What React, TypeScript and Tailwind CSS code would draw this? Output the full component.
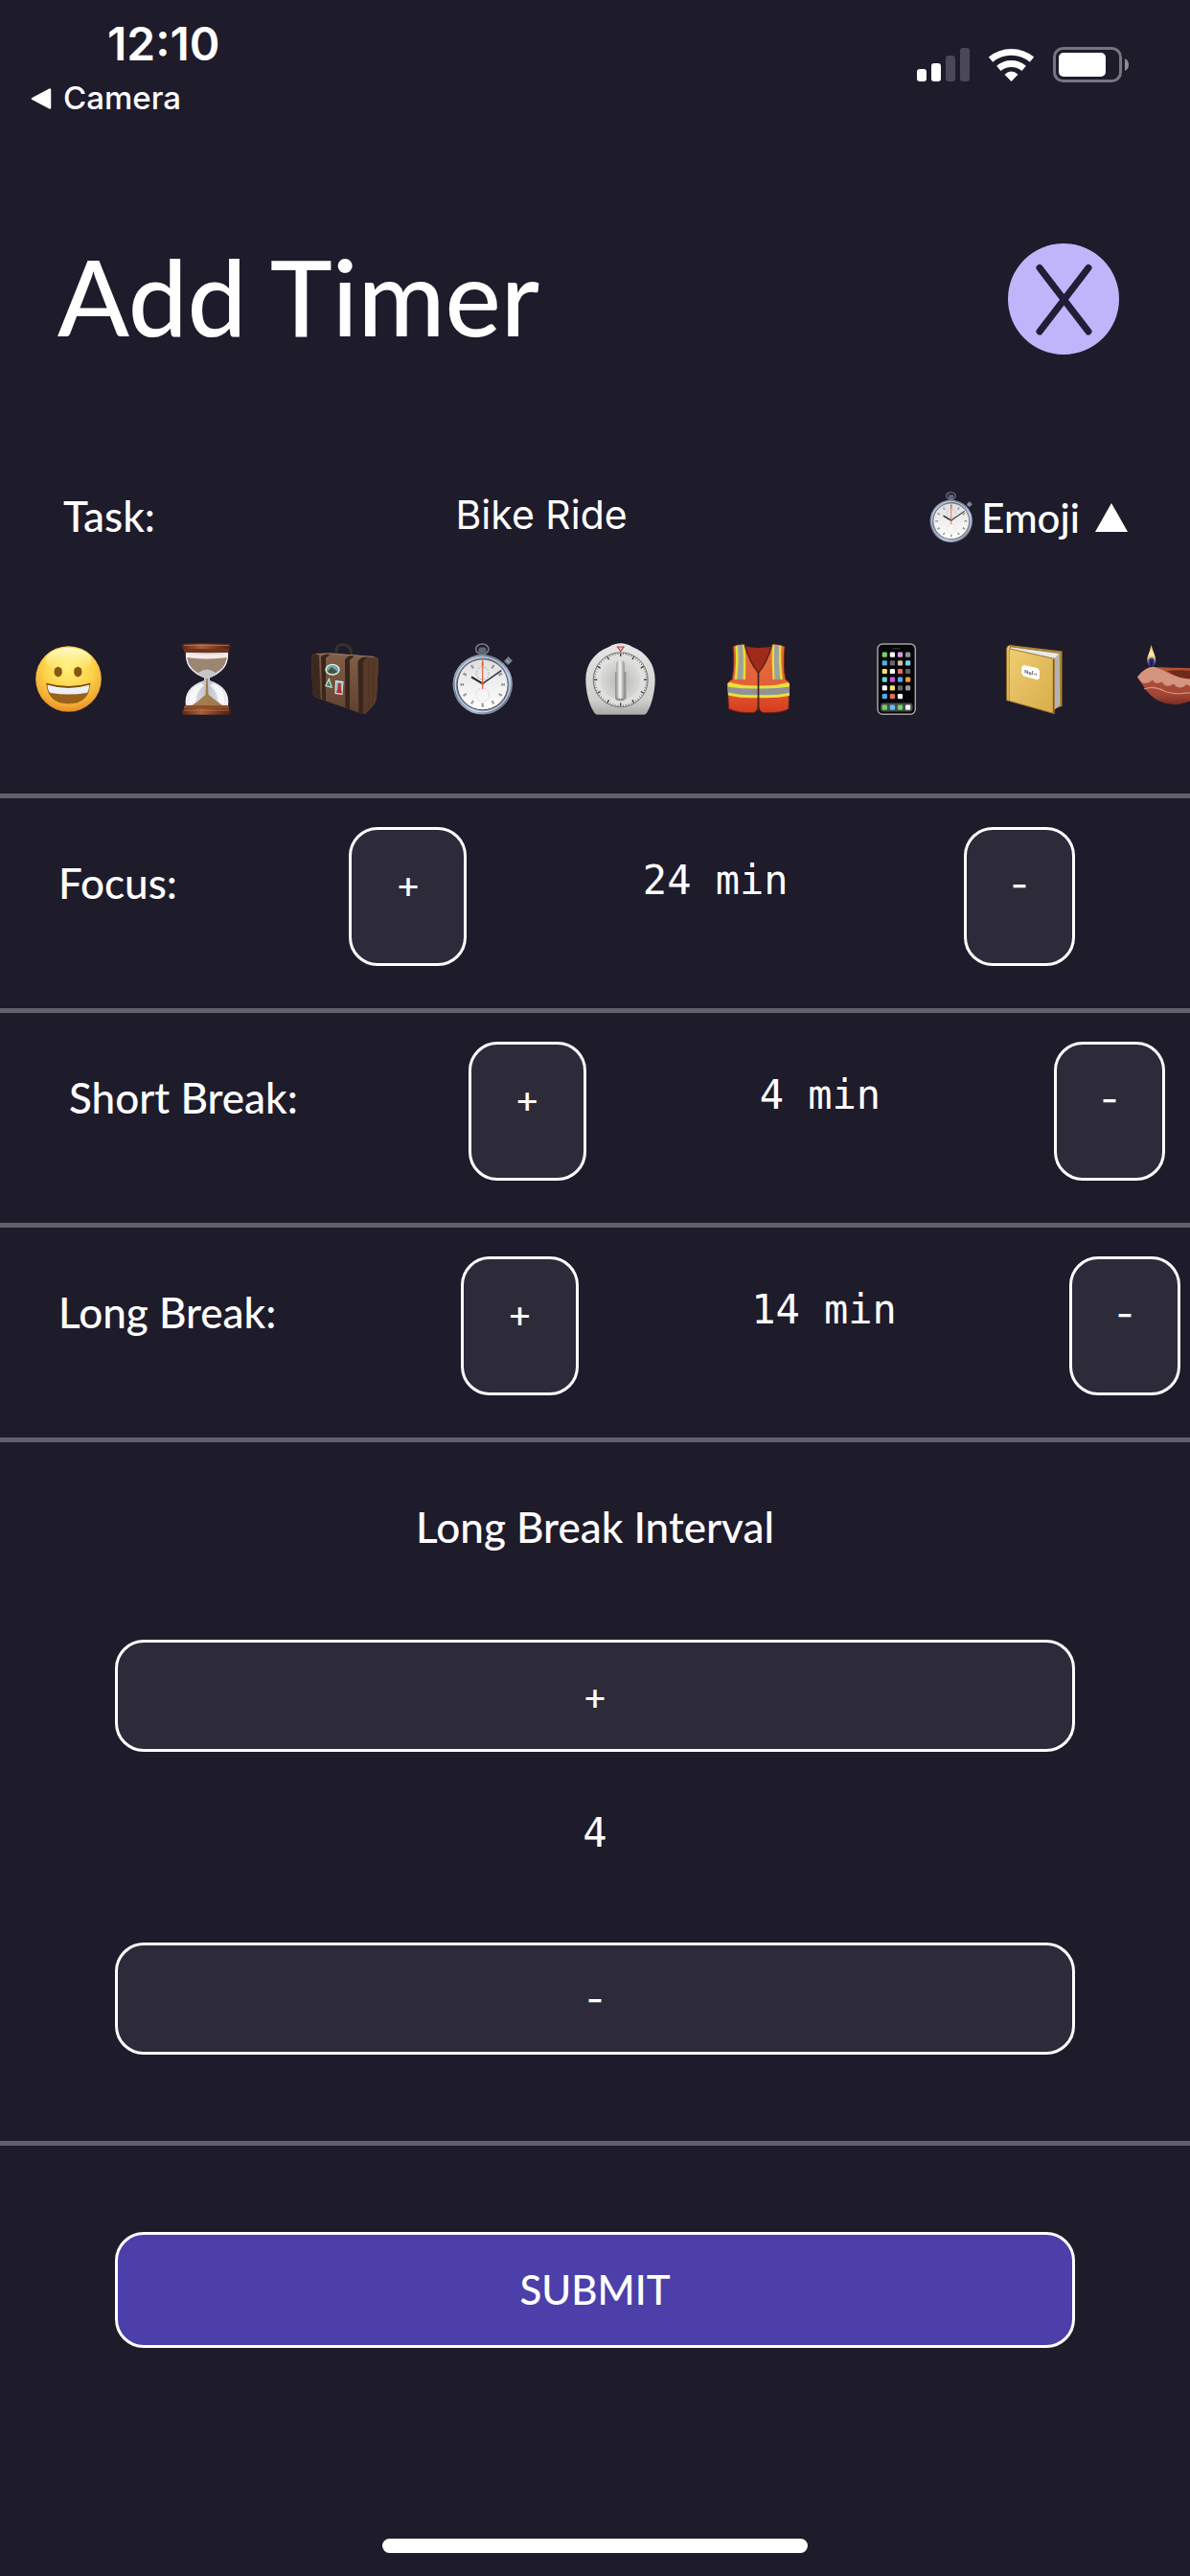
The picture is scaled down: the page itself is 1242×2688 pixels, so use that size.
import { useState } from "react";
import type { ReactNode } from "react";

function Art({ children, className = "h-[76px] w-[76px]" }: { children: ReactNode; className?: string }) {
  return (
    <svg viewBox="0 0 76 76" className={className} aria-hidden="true">
      {children}
    </svg>
  );
}

function Grin() {
  return (
    <Art>
      <defs>
        <radialGradient id="grinSkin" cx="50%" cy="32%" r="68%">
          <stop offset="0" stopColor="#fff07a" />
          <stop offset="0.55" stopColor="#fdd348" />
          <stop offset="0.85" stopColor="#f3ac35" />
          <stop offset="1" stopColor="#e48a25" />
        </radialGradient>
        <linearGradient id="grinShine" x1="0" y1="0" x2="0" y2="1">
          <stop offset="0" stopColor="#fffbd0" />
          <stop offset="1" stopColor="#fff07a" stopOpacity="0" />
        </linearGradient>
      </defs>
      <circle cx="37.5" cy="37.5" r="34.3" fill="url(#grinSkin)" />
      <ellipse cx="37.5" cy="18" rx="24" ry="13" fill="url(#grinShine)" />
      <ellipse cx="26.7" cy="30" rx="4.2" ry="5.2" fill="#8a5510" />
      <ellipse cx="47.3" cy="30" rx="4.2" ry="5.2" fill="#8a5510" />
      <path d="M14.3 42.3Q37.500 49 60.300 42.300Q59 63.500 37.500 63.500Q16 63.500 14.300 42.300Z" fill="#9a621b" />
      <path d="M15.500 43.800Q37.500 50 59.200 43.800Q58.800 50.500 56.500 52Q37.500 55 18.500 52Q16 50 15.500 43.800Z" fill="#eef0f5" />
      <path d="M14.300 42.300Q37.500 49 60.300 42.300" fill="none" stroke="#7b4a0c" strokeWidth="1.200" />
    </Art>
  );
}

function Hourglass() {
  return (
    <Art>
      <defs>
        <linearGradient id="wood" x1="0" y1="0" x2="1" y2="0">
          <stop offset="0" stopColor="#5d2a17" />
          <stop offset="0.4" stopColor="#a9603c" />
          <stop offset="0.7" stopColor="#7c3c20" />
          <stop offset="1" stopColor="#4b2011" />
        </linearGradient>
        <linearGradient id="glass" x1="0" y1="0" x2="1" y2="0">
          <stop offset="0" stopColor="#f4f5fa" />
          <stop offset="0.5" stopColor="#bfc0cb" />
          <stop offset="1" stopColor="#f0f1f6" />
        </linearGradient>
      </defs>
      <path d="M16 9H60C61 22 56 30 41 36.500V39C56 44 62 53 60 66H16C14 53 20 44 35 39V36.500C20 30 15 22 16 9Z" fill="url(#glass)" />
      <path d="M17.500 15H58.500C58 24 52 29 43 33L33 33C23 29 18 23 17.500 15Z" fill="#9b8672" />
      <ellipse cx="38" cy="14" rx="21" ry="2.500" fill="#f6ece8" />
      <path d="M29 31Q38 24 47 31Q42 34 39.500 37H36.500Q34 34 29 31Z" fill="#c9c4c5" />
      <path d="M37.300 37H38.700L39.500 54Q49 61 55 66H21Q29 61 36.500 54Z" fill="#a27c4c" />
      <path d="M20 57Q20 47 31 42L35 44Q27 50 26 62L20 64Z" fill="#fff" fillOpacity=".75" />
      <path d="M56 57Q56 47 45 42L41 44Q49 50 50 62L56 64Z" fill="#fff" fillOpacity=".75" />
      <rect x="12.300" y=".7" width="50.400" height="6" rx="2" fill="url(#wood)" />
      <rect x="14" y="6" width="47" height="4" rx="1.500" fill="#6e351c" />
      <rect x="14" y="65" width="47" height="4.500" rx="1.500" fill="#8f4b2c" />
      <rect x="12.300" y="68.500" width="50.400" height="6.300" rx="2" fill="url(#wood)" />
      <path d="M14 2.500H61M14 70.200H61" stroke="#bd7450" strokeWidth=".8" />
    </Art>
  );
}

function Suitcase() {
  return (
    <Art>
      <defs>
        <linearGradient id="leather" x1="0" y1="0" x2="0" y2="1">
          <stop offset="0" stopColor="#80604a" />
          <stop offset="1" stopColor="#61412e" />
        </linearGradient>
      </defs>
      <path d="M29 13V8Q29 1.500 36 1.500Q44 2.500 44.500 9V15" fill="none" stroke="#3a302e" strokeWidth="3" />
      <path d="M3 15Q3 11.500 8 11L24 10.500L68 14Q73 15 73 19L71 58Q70 63 66 67L60 73Q58 74.500 55 73.500L8 57Q4.500 55.500 4.200 51Z" fill="url(#leather)" />
      <path d="M55 18Q57 14.500 62 14L68 14Q73 15 73 19L71 58Q70 63 60 73Q57 74.500 54 73Z" fill="#583a2a" />
      <path d="M3 15Q3.500 11.500 8 11L11 12.500L12.500 58.500L7 56.500Q4.500 55 4.200 51Z" fill="#3c281f" />
      <path d="M13 14L19 11L23 11.500L18 15.500V60.500L14.300 59.200ZM38 17L43 13L48 13.300L43 18V69.300L38.500 67.800ZM51.500 20Q53 15 60 14L64 14Q57 16 57 21L57 74L52.500 72.700Z" fill="#38251c" />
      <path d="M8 11.500L22 11L68 14.500" fill="none" stroke="#9b7860" strokeWidth="1" />
      <path d="M63 19V68M68 18L67 64" stroke="#482d20" strokeWidth=".8" />
      <ellipse cx="25" cy="27.700" rx="7.700" ry="6" fill="#e9ede2" />
      <ellipse cx="25" cy="27.700" rx="6.300" ry="4.700" fill="#75a4b8" />
      <path d="M19.500 30L24 25L30.500 30Q25 34 19.500 30Z" fill="#425541" />
      <path d="M21.500 36L25 47L17 45Z" fill="#d9e8dd" />
      <path d="M21.300 39L23.500 45.500L18.500 44.500Z" fill="#328e78" />
      <path d="M28 39L36.500 40L35.500 54L27.500 53Z" fill="#e3e8e8" />
      <path d="M29 40.500L35.500 41.200L35 52.500L28.500 52Z" fill="#8bb4be" />
      <path d="M31 42H33.500L34 49L35 52.500L29 52L30.500 48Z" fill="#b72f2b" />
    </Art>
  );
}

function Stopwatch({ className }: { className?: string }) {
  const ticks = Array.from({ length: 12 }, (_, i) => i * 30);
  return (
    <Art className={className}>
      <defs>
        <linearGradient id="chrome" x1="0" y1="0" x2="1" y2="1">
          <stop offset="0" stopColor="#c4cddd" />
          <stop offset="0.35" stopColor="#6f7c91" />
          <stop offset="0.65" stopColor="#a9b9d6" />
          <stop offset="1" stopColor="#4b4c55" />
        </linearGradient>
        <linearGradient id="dialFace" x1="0" y1="0" x2="0" y2="1">
          <stop offset="0" stopColor="#dfdfe1" />
          <stop offset="1" stopColor="#ffffff" />
        </linearGradient>
      </defs>
      <ellipse cx="37.300" cy="6.300" rx="6.700" ry="5.300" fill="none" stroke="#777d89" strokeWidth="1.600" />
      <rect x="33.500" y="4.500" width="8" height="9" rx="2" fill="#5d6878" />
      <path d="M60 19L64.500 14L69 18.500L64 23Z" fill="#747f8c" />
      <path d="M62.500 17.500L66 21" stroke="#b5c0ca" strokeWidth="1" />
      <circle cx="37.700" cy="43.300" r="31.200" fill="url(#chrome)" />
      <circle cx="37.700" cy="43.300" r="28.500" fill="none" stroke="#d7e2f3" strokeWidth="1" />
      <circle cx="37.700" cy="43.300" r="26.500" fill="url(#dialFace)" stroke="#50535d" strokeWidth="1" />
      {ticks.map((t) => (
        <path key={t} d="M37.700 20.200V24" stroke="#777" strokeWidth="2.200" strokeDasharray="1.400 .6" transform={`rotate(${t} 37.700 43.300)`} />
      ))}
      <circle cx="37.700" cy="31.500" r="6.500" fill="none" stroke="#aaa" strokeWidth="1" strokeDasharray="2 1.500" />
      <circle cx="37.700" cy="54" r="7" fill="none" stroke="#d3d3d5" strokeWidth="1" strokeDasharray="2 1.500" />
      <path d="M37.700 42.300L57.300 28.700" stroke="#27313b" strokeWidth="1.500" />
      <path d="M37.700 42.300L26 35.300" stroke="#20272e" strokeWidth="2" />
      <path d="M37.700 17.500V48" stroke="#e4572f" strokeWidth="1.100" />
      <circle cx="37.700" cy="42.300" r="1.500" fill="#d55a33" />
    </Art>
  );
}

function KitchenTimer() {
  const ticks = Array.from({ length: 60 }, (_, i) => i);
  return (
    <Art>
      <defs>
        <linearGradient id="enamel" x1="0" y1="0" x2="0" y2="1">
          <stop offset="0" stopColor="#e6e6e5" />
          <stop offset="0.8" stopColor="#cfcfce" />
          <stop offset="1" stopColor="#a8a8a7" />
        </linearGradient>
        <radialGradient id="knob" cx="50%" cy="55%" r="50%">
          <stop offset="0" stopColor="#b8b8b7" />
          <stop offset="1" stopColor="#d9d9d8" />
        </radialGradient>
        <linearGradient id="grip" x1="0" y1="0" x2="1" y2="0">
          <stop offset="0" stopColor="#a0a09f" />
          <stop offset="0.45" stopColor="#f7f7f6" />
          <stop offset="1" stopColor="#8d8d8c" />
        </linearGradient>
      </defs>
      <path d="M37.700 .3Q44 .3 50 4C65 10 73.500 22 73.700 38C73.500 52 70 65 65 73Q64 74.700 62 74.700H13.500Q11.500 74.700 10.500 73C5 65 1.500 52 1.300 38C1.500 22 10 10 25.500 4Q31.500 .3 37.700 .3Z" fill="url(#enamel)" />
      <circle cx="37.700" cy="38.300" r="28.500" fill="#e0e0df" stroke="#72726f" strokeWidth="1" />
      {ticks.map((i) => (
        <path
          key={i}
          d={i % 5 === 0 ? "M37.700 10.500V14" : "M37.700 10.500V12"}
          stroke="#333"
          strokeWidth={i % 5 === 0 ? 1.3 : 0.6}
          transform={`rotate(${i * 6} 37.700 38.300)`}
        />
      ))}
      <circle cx="37.700" cy="38.300" r="21" fill="url(#knob)" />
      <path d="M32 56Q31 60 37.700 60.500Q45 60 43.500 54V30H32Z" fill="#959594" />
      <rect x="33.300" y="18" width="8.500" height="40" rx="4" fill="url(#grip)" />
      <path d="M34.500 4H41L37.700 8.500Z" fill="#f3c8c7" stroke="#b44249" strokeWidth="1.200" />
    </Art>
  );
}

function Vest() {
  return (
    <Art>
      <defs>
        <linearGradient id="vestCloth" x1="0" y1="0" x2="0" y2="1">
          <stop offset="0" stopColor="#e66b3e" />
          <stop offset="0.6" stopColor="#e2603a" />
          <stop offset="1" stopColor="#d63a1e" />
        </linearGradient>
      </defs>
      <path d="M22 3Q38 7 54 3L52 32H24Z" fill="#a02a1a" />
      <path d="M11 3.500Q17 1 23 1.500Q29 20 37.500 31Q46 20 52 1.500Q59 1 65 3.500Q63 25 66 38Q69 40 70 42L69 69Q60 73.500 42 72.500Q38 70 37.500 66Q37 70 33 72.500Q16 73.500 6.500 68.500L5.300 42Q7 39 10 38Q13 22 11 3.500Z" fill="url(#vestCloth)" stroke="#6b2212" strokeWidth=".8" />
      <path d="M13.500 2.700L23 1.500Q25 12 24 38H12.500Q15 20 13.500 2.700ZM52 1.500L61.500 2.700Q60.500 20 63 38H52.500Q51 15 52 1.500Z" fill="#e3df35" />
      <path d="M16 2.400L20.800 1.800Q22.500 14 21.500 38H15.200Q17.500 20 16 2.400ZM54.300 1.600L59 2.200Q58 20 60.300 38H54.500Q53.500 15 54.300 1.600Z" fill="#a09fa1" />
      <path d="M5.300 42L8 41Q22 45 37.500 44.500Q54 45 69 41L70 43V55Q55 58 37.500 57Q20 58 6 54.500Z" fill="#e8e137" />
      <path d="M5.500 45.500Q20 48 37.500 47.500Q55 48 70 45.500V52Q55 55 37.500 54Q20 55 5.800 51.500Z" fill="#8f9299" />
      <path d="M23 1.500Q29 22 37.500 31Q46 22 52 1.500" fill="none" stroke="#5c2315" strokeWidth="1.300" />
      <path d="M37.500 30V71" stroke="#3d241b" strokeWidth="1.700" />
    </Art>
  );
}

const appColors = [
  ["#6fd36b", "#ffffff", "#d3a1e6", "#929294"],
  ["#52aaf2", "#66666a", "#d1bf9f", "#71d3f2"],
  ["#fbe266", "#ffffff", "#ec6a5f", "#626264"],
  ["#6fd3d9", "#cf55d2", "#52aaf2", "#f2983b"],
  ["#ffffff", "#fbe266", "#66666a", "#98989a"],
  ["#52aaf2", "#ec6a5f", "#ffffff"],
];

function Phone() {
  return (
    <Art>
      <rect x="18" y="1" width="39.300" height="73.300" rx="5" fill="#050507" stroke="#a3a3a6" strokeWidth="1.500" />
      <path d="M34 5.700H41" stroke="#2c2c2e" strokeWidth="1.500" strokeLinecap="round" />
      <rect x="21" y="62.500" width="33.500" height="9" rx="3" fill="#4b4b4d" />
      {appColors.map((row, r) =>
        row.map((color, c) => (
          <rect key={`${r}-${c}`} x={22.7 + c * 8.1} y={9.5 + r * 8.7} width="5.200" height="5.200" rx="1.200" fill={color} />
        ))
      )}
      {["#6fd36b", "#5cc2f2", "#6fd36b", "#ffffff"].map((color, c) => (
        <rect key={c} x={22.7 + c * 8.1} y="64.500" width="5.200" height="5.200" rx="1.200" fill={color} />
      ))}
    </Art>
  );
}

function Notebook() {
  return (
    <Art>
      <defs>
        <linearGradient id="cover" x1="0" y1="0" x2="1" y2="1">
          <stop offset="0" stopColor="#f1d071" />
          <stop offset="0.5" stopColor="#e3bd60" />
          <stop offset="1" stopColor="#d9ad48" />
        </linearGradient>
      </defs>
      <path d="M12 2L66.500 8.500V66L60 68L12 20Z" fill="#ad8430" />
      <path d="M12 4.500L63.500 11L64 65L58 70L56 17L10 7Z" fill="#c5c5c8" />
      <path d="M13 4.500L63 11.200L58 16L13 7Z" fill="#e8e8eb" />
      <path d="M60 15V68.500M62 13V67" stroke="#939398" strokeWidth=".7" />
      <path d="M8.700 5Q9.500 2.500 13 2L12 6L58.300 16.300V73.700L8.700 59.700Z" fill="url(#cover)" stroke="#996d20" strokeWidth=".9" />
      <path d="M11.300 6V60" stroke="#c19843" strokeWidth="1.300" />
      <path d="M57.500 17V73" stroke="#835b21" strokeWidth="1.300" />
      <path d="M26.500 23L41 26.200L43 29V36.500L41 38.500L26.500 34.500L24.300 32V25Z" fill="#fff" />
      <path d="M28 31.500V28L30.500 32V28.500M32 30.500L34 31V33L32 32.500ZM35.500 29V33M37 33L38.500 31.500M39.500 32L39.200 34" fill="none" stroke="#77777a" strokeWidth="1" />
    </Art>
  );
}

function OilLamp() {
  return (
    <Art>
      <defs>
        <linearGradient id="flame" x1="0" y1="0" x2="0" y2="1">
          <stop offset="0" stopColor="#f2b94a" />
          <stop offset="0.45" stopColor="#fff3b0" />
          <stop offset="0.7" stopColor="#c9975b" />
          <stop offset="1" stopColor="#2a39ae" />
        </linearGradient>
        <linearGradient id="clay" x1="0" y1="0" x2="0" y2="1">
          <stop offset="0" stopColor="#b85a45" />
          <stop offset="0.75" stopColor="#a04434" />
          <stop offset="1" stopColor="#7b2d21" />
        </linearGradient>
      </defs>
      <path d="M1 35.500Q8 26 17 25Q45 25 74 31Q72 56 52 62Q38 67 25 61Q15 57 8 46Z" fill="url(#clay)" />
      <path d="M25 26.500Q50 24.500 74 28V38H52Q38 35 25 26.500Z" fill="#b5502f" />
      <path d="M32 29Q52 27 74 31V38H54Q42 36 32 29Z" fill="#71291c" />
      <path d="M1 35.500Q8 26 17 24.500Q26 27 35 32Q44 36.500 55 37.500H74V42Q69 46 65 41.500Q59 49 53 43Q45 50 39 42.500Q31 48 27 40.500Q20 44 17 38.500Q12 43 6 41.500Z" fill="#d5947f" />
      <path d="M8 48Q18 44 29 50Q43 56 67 49" fill="none" stroke="#db9275" strokeWidth="1.200" />
      <path d="M15.500 2Q18 10 20 15Q21 22 17.500 24H13.500Q10.500 20 11.500 15Q14 9 15.500 2Z" fill="url(#flame)" />
      <ellipse cx="15.800" cy="20" rx="3" ry="4.500" fill="#2536a0" />
      <path d="M15.800 18V25" stroke="#251923" strokeWidth="1.800" />
    </Art>
  );
}

const emojis: { name: string; Icon: () => ReactNode }[] = [
  { name: "Grinning face", Icon: Grin },
  { name: "Hourglass", Icon: Hourglass },
  { name: "Luggage", Icon: Suitcase },
  { name: "Stopwatch", Icon: () => <Stopwatch /> },
  { name: "Timer clock", Icon: KitchenTimer },
  { name: "Safety vest", Icon: Vest },
  { name: "Mobile phone", Icon: Phone },
  { name: "Notebook", Icon: Notebook },
  { name: "Diya lamp", Icon: OilLamp },
];

function StatusBar() {
  return (
    <div className="flex h-[132px] items-start justify-between pr-[63px] pl-8">
      <div className="font-['Inter',sans-serif]">
        <div className="mt-4 pl-20 text-[48px] leading-[60px] font-semibold">12:10</div>
        <a href="#camera" className="flex h-[54px] items-center gap-3 text-[33px] font-medium">
          <svg viewBox="0 0 22 22" className="h-[22px] w-[22px]" aria-hidden="true">
            <path d="M20 1.500V20.500L2 11Z" fill="#fff" stroke="#fff" strokeWidth="2.500" strokeLinejoin="round" />
          </svg>
          Camera
        </a>
      </div>
      <svg viewBox="0 0 222 38" className="mt-12 h-[38px] w-[222px]" role="img" aria-label="Signal, Wi-Fi and battery">
        <rect x="0" y="24" width="10" height="13" rx="3" fill="#fff" />
        <rect x="15" y="18" width="10" height="19" rx="3" fill="#fff" />
        <rect x="30" y="10" width="10" height="27" rx="3" fill="#4a4856" />
        <rect x="45" y="2" width="10" height="35" rx="3" fill="#4a4856" />
        <path d="M77 14.200A33.500 33.500 0 0 1 120 14.200" fill="none" stroke="#fff" strokeWidth="6.800" />
        <path d="M85.300 23.300A20.500 20.500 0 0 1 111.700 23.300" fill="none" stroke="#fff" strokeWidth="6.800" />
        <path d="M91.500 29.800Q98.500 23.200 105.500 29.800L98.500 37Z" fill="#fff" />
        <rect x="143.500" y="2.500" width="69" height="34" rx="9" fill="none" stroke="#777580" strokeWidth="3" />
        <rect x="148" y="7" width="49" height="25" rx="5" fill="#fff" />
        <path d="M217 13Q221 15 221 19.500T217 26Z" fill="#8e8c95" />
      </svg>
    </div>
  );
}

const stepButton = "shrink-0 rounded-[30px] border-3 border-white bg-[#2d2b3a] font-['Inter',sans-serif] text-[40px] leading-[50px]";

type RowProps = { label: string; value: number; onChange: (v: number) => void; rowClass: string; labelClass: string };

function DurationRow({ label, value, onChange, rowClass, labelClass }: RowProps) {
  return (
    <div role="group" aria-label={label} className={`flex items-start justify-between border-b-5 border-[#63606c] pt-[30px] pb-11 ${rowClass}`}>
      <span className={`shrink-0 pt-8 text-[44px] leading-[52px] font-medium whitespace-nowrap ${labelClass}`}>{label}:</span>
      <button type="button" aria-label={`Increase ${label}`} onClick={() => onChange(value + 1)} className={`${stepButton} flex h-[145px] w-[123px] justify-center pt-8`}>
        +
      </button>
      <output className="pt-[30px] font-['DejaVu_Sans_Mono',monospace] text-[42px] leading-[52px] whitespace-nowrap">{value} min</output>
      <button type="button" aria-label={`Decrease ${label}`} onClick={() => onChange(value - 1)} className={`${stepButton} flex h-[145px] w-[116px] justify-center pt-8`}>
        -
      </button>
    </div>
  );
}

export default function App() {
  const [task, setTask] = useState("Bike Ride");
  const [open, setOpen] = useState(true);
  const [focus, setFocus] = useState(24);
  const [shortBreak, setShortBreak] = useState(4);
  const [longBreak, setLongBreak] = useState(14);
  const [interval, setInterval] = useState(4);

  return (
    <div className="flex min-h-screen flex-col overflow-x-hidden bg-[#1e1b2b] font-['Lato',sans-serif] text-white">
      <StatusBar />

      <header className="flex items-start justify-between pt-[122px] pr-[74px] pl-[60px]">
        <h1 className="text-[110px] leading-[108px] font-medium">Add Timer</h1>
        <button type="button" aria-label="Close" className="h-[116px] w-[116px] rounded-full bg-[#c0b5fb]">
          <svg viewBox="0 0 116 116" className="h-full w-full" aria-hidden="true">
            <path d="M33 25.500L84 92M84 25.500L33 92" stroke="#231e38" strokeWidth="7" strokeLinecap="round" />
          </svg>
        </button>
      </header>

      <form onSubmit={(e) => e.preventDefault()} className="flex flex-col">
        <div className="mt-[134px] flex h-[68px] items-center justify-between pr-[65px] pl-[66px]">
          <label htmlFor="task" className="w-[98px] shrink-0 text-[44px] font-medium">
            Task:
          </label>
          <input
            id="task"
            value={task}
            onChange={(e) => setTask(e.target.value)}
            className="w-[320px] bg-transparent text-center font-['Inter',sans-serif] text-[41px] outline-none"
          />
          <button type="button" aria-expanded={open} onClick={() => setOpen(!open)} className="flex items-center pt-1 text-[42px] font-medium">
            <Stopwatch className="mr-1 h-[54px] w-[54px]" />
            Emoji
            <svg viewBox="0 0 34 30" className="ml-4 h-[30px] w-[34px]" aria-hidden="true">
              <path d="M17 0L34 30H0Z" fill="#fff" />
            </svg>
          </button>
        </div>

        <div className="mt-[99px] flex h-[157px] items-start overflow-hidden">
          {open &&
            emojis.map(({ name, Icon }) => (
              <button key={name} type="button" aria-label={name} className="flex w-36 shrink-0 justify-center">
                <Icon />
              </button>
            ))}
        </div>

        <div className="border-t-5 border-[#63606c]">
          <DurationRow label="Focus" value={focus} onChange={setFocus} rowClass="pl-[61px] pr-[120px]" labelClass="w-[120px]" />
          <DurationRow label="Short Break" value={shortBreak} onChange={setShortBreak} rowClass="pl-[72px] pr-[26px]" labelClass="w-[236px]" />
          <DurationRow label="Long Break" value={longBreak} onChange={setLongBreak} rowClass="pl-[61px] pr-[10px]" labelClass="w-[240px]" />
        </div>

        <div role="group" aria-labelledby="interval" className="flex flex-col items-center border-b-5 border-[#63606c] px-[120px] pt-[62px] pb-[90px]">
          <h2 id="interval" className="text-[44px] leading-[52px] font-medium">
            Long Break Interval
          </h2>
          <button type="button" aria-label="Increase interval" onClick={() => setInterval(interval + 1)} className={`${stepButton} mt-[92px] h-[117px] w-full`}>
            +
          </button>
          <output className="mt-[59px] font-['DejaVu_Sans_Mono',monospace] text-[42px] leading-[52px]">{interval}</output>
          <button type="button" aria-label="Decrease interval" onClick={() => setInterval(interval - 1)} className={`${stepButton} mt-[88px] h-[117px] w-full`}>
            -
          </button>
        </div>

        <div className="px-[120px] pt-[90px]">
          <button type="submit" className="h-[121px] w-full rounded-[30px] border-3 border-white bg-[#4c3fa9] text-[42px] font-medium">
            SUBMIT
          </button>
        </div>
      </form>

      <div className="mx-auto mt-auto mb-6 h-[15px] w-[444px] rounded-full bg-white" />
    </div>
  );
}
